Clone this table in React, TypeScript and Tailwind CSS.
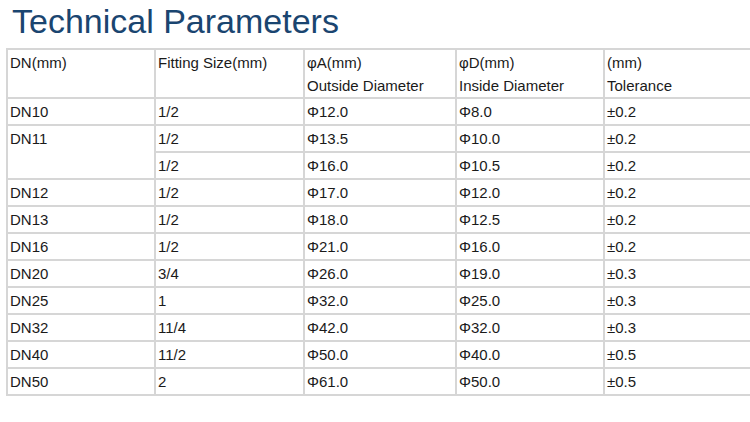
type Row = { dn?: string; span?: number; size: string; a: string; d: string; tol: string };

const ROWS: Row[] = [
  { dn: "DN10", size: "1/2", a: "Φ12.0", d: "Φ8.0", tol: "±0.2" },
  { dn: "DN11", span: 2, size: "1/2", a: "Φ13.5", d: "Φ10.0", tol: "±0.2" },
  { size: "1/2", a: "Φ16.0", d: "Φ10.5", tol: "±0.2" },
  { dn: "DN12", size: "1/2", a: "Φ17.0", d: "Φ12.0", tol: "±0.2" },
  { dn: "DN13", size: "1/2", a: "Φ18.0", d: "Φ12.5", tol: "±0.2" },
  { dn: "DN16", size: "1/2", a: "Φ21.0", d: "Φ16.0", tol: "±0.2" },
  { dn: "DN20", size: "3/4", a: "Φ26.0", d: "Φ19.0", tol: "±0.3" },
  { dn: "DN25", size: "1", a: "Φ32.0", d: "Φ25.0", tol: "±0.3" },
  { dn: "DN32", size: "11/4", a: "Φ42.0", d: "Φ32.0", tol: "±0.3" },
  { dn: "DN40", size: "11/2", a: "Φ50.0", d: "Φ40.0", tol: "±0.5" },
  { dn: "DN50", size: "2", a: "Φ61.0", d: "Φ50.0", tol: "±0.5" },
];

const cell = "border-2 border-[#d6d6d6] px-[2px] align-middle h-[27px] leading-[23px]";
const head = "border-2 border-[#d6d6d6] px-[2px] align-top pt-[1px] h-[49px] leading-[23px] font-normal text-left";

export default function App() {
  return (
    <div className="w-[750px] h-[422px] overflow-hidden bg-white font-['Liberation_Sans',Arial,sans-serif]">
      <h1 className="pl-[12px] pt-[4px] text-[34px] leading-[34px] text-[#1a4570]">Technical Parameters</h1>
      <table className="mt-[10px] ml-[6px] w-[760px] table-fixed border-collapse text-[15px] text-[#1a1a1a]">
        <colgroup>
          <col className="w-[148px]" />
          <col className="w-[149px]" />
          <col className="w-[152px]" />
          <col className="w-[148px]" />
          <col />
        </colgroup>
        <thead>
          <tr>
            <th className={head}>DN(mm)</th>
            <th className={head}>Fitting Size(mm)</th>
            <th className={head}>
              φA(mm)
              <br />
              Outside Diameter
            </th>
            <th className={head}>
              φD(mm)
              <br />
              Inside Diameter
            </th>
            <th className={head}>
              (mm)
              <br />
              Tolerance
            </th>
          </tr>
        </thead>
        <tbody>
          {ROWS.map((r, i) => (
            <tr key={i}>
              {r.dn && (
                <td rowSpan={r.span ?? 1} className={`${cell} ${r.span ? "align-top pt-[1px]" : ""}`}>
                  {r.dn}
                </td>
              )}
              <td className={cell}>{r.size}</td>
              <td className={cell}>{r.a}</td>
              <td className={cell}>{r.d}</td>
              <td className={cell}>{r.tol}</td>
            </tr>
          ))}
        </tbody>
      </table>
    </div>
  );
}
